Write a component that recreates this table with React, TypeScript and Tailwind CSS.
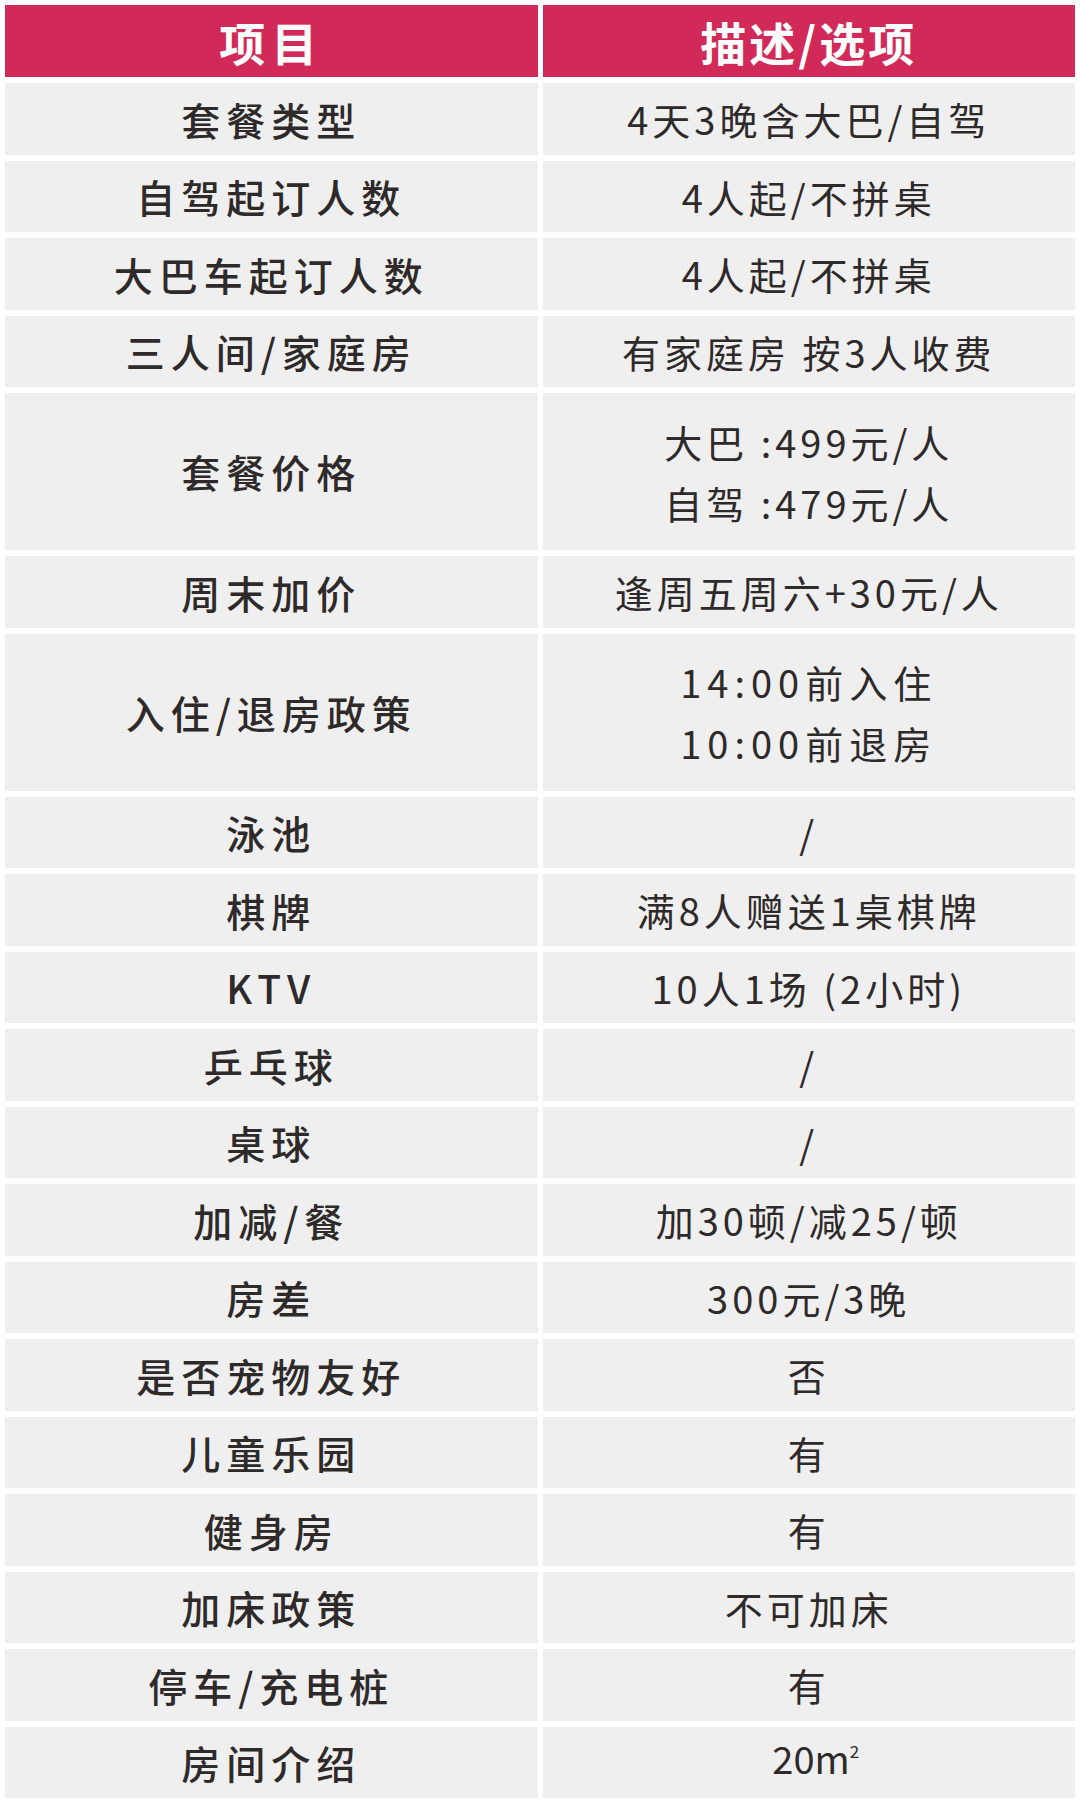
import React from 'react';

type Row = { label: string; value: React.ReactNode; tall?: boolean };

const rows: Row[] = [
  { label: '套餐类型', value: '4天3晚含大巴/自驾' },
  { label: '自驾起订人数', value: '4人起/不拼桌' },
  { label: '大巴车起订人数', value: '4人起/不拼桌' },
  { label: '三人间/家庭房', value: '有家庭房 按3人收费' },
  {
    label: '套餐价格',
    value: (
      <>
        <div>大巴 :499元/人</div>
        <div>自驾 :479元/人</div>
      </>
    ),
    tall: true,
  },
  { label: '周末加价', value: '逢周五周六+30元/人' },
  {
    label: '入住/退房政策',
    value: (
      <div className="tracking-[6px]">
        <div>14:00前入住</div>
        <div>10:00前退房</div>
      </div>
    ),
    tall: true,
  },
  { label: '泳池', value: '/' },
  { label: '棋牌', value: '满8人赠送1桌棋牌' },
  { label: 'KTV', value: '10人1场 (2小时)' },
  { label: '乒乓球', value: '/' },
  { label: '桌球', value: '/' },
  { label: '加减/餐', value: '加30顿/减25/顿' },
  { label: '房差', value: '300元/3晚' },
  { label: '是否宠物友好', value: '否' },
  { label: '儿童乐园', value: '有' },
  { label: '健身房', value: '有' },
  { label: '加床政策', value: '不可加床' },
  { label: '停车/充电桩', value: '有' },
  {
    label: '房间介绍',
    value: (
      <span className="tracking-normal pl-[14px]">
        20m<span className="text-[17px] relative -top-[16px]">2</span>
      </span>
    ),
  },
];

const font = { fontFamily: '"Noto Sans CJK SC", "Noto Sans", sans-serif' };

export default function App() {
  return (
    <div className="w-[1080px] min-h-[1801px] bg-white pt-[5px] px-[5px]" style={font}>
      <div className="grid grid-cols-2 gap-x-[5px] gap-y-[6px]">
        <div className="h-[72px] bg-[#d22a58] text-white font-bold text-[46px] tracking-[6px] flex items-center justify-center">
          项目
        </div>
        <div className="h-[72px] bg-[#d22a58] text-white font-bold text-[46px] tracking-[3px] flex items-center justify-center">
          描述/选项
        </div>
        {rows.map((r) => (
          <React.Fragment key={r.label}>
            <div
              className={`${r.tall ? 'h-[157px]' : 'h-[71.5px]'} bg-[#efefef] text-[#2e2a2a] font-medium text-[39px] tracking-[6px] flex items-center justify-center`}
            >
              {r.label}
            </div>
            <div
              className={`${r.tall ? 'h-[157px]' : 'h-[71.5px]'} bg-[#efefef] text-[#2e2a2a] text-[38px] tracking-[4px] leading-[61px] flex flex-col items-center justify-center text-center`}
            >
              {r.value}
            </div>
          </React.Fragment>
        ))}
      </div>
    </div>
  );
}
